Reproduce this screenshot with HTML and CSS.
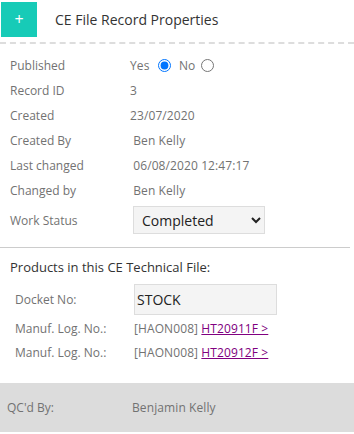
FILE: index.html
```html
<!DOCTYPE html>
<html lang="en">
<head>
  <meta charset="UTF-8">
  <meta name="viewport" content="width=device-width, initial-scale=1.0">
  <title>CE File Record Properties</title>
  <link rel="stylesheet" href="styles.css">
</head>
<body>
<div class="panel">
  <div class="panel-header">
    <button class="toggle">+</button>
    <h2>CE File Record Properties</h2>
  </div>

  <div class="props">
    <div class="row">
      <span class="label">Published</span>
      <span class="value">
        Yes <input type="radio" name="published" checked>
        No <input class="last" type="radio" name="published">
      </span>
    </div>
    <div class="row">
      <span class="label">Record ID</span>
      <span class="value">3</span>
    </div>
    <div class="row">
      <span class="label">Created</span>
      <span class="value">23/07/2020</span>
    </div>
    <div class="row">
      <span class="label">Created By</span>
      <span class="value">&nbsp;Ben Kelly</span>
    </div>
    <div class="row">
      <span class="label">Last changed</span>
      <span class="value">&nbsp;06/08/2020 12:47:17</span>
    </div>
    <div class="row">
      <span class="label">Changed by</span>
      <span class="value">&nbsp;Ben Kelly</span>
    </div>
    <div class="row status">
      <span class="label">Work Status</span>
      <select class="value status-select">
        <option>Completed</option>
        <option>In Progress</option>
        <option>Not Started</option>
      </select>
    </div>
  </div>

  <hr class="divider">

  <div class="products">
    <h3>Products in this CE Technical File:</h3>
    <div class="row docket">
      <span class="label">Docket No:</span>
      <input class="docket-input" type="text" value="STOCK">
    </div>
    <div class="row">
      <span class="label">Manuf. Log. No.:</span>
      <span class="value">[HAON008] <a href="#">HT20911F &gt;</a></span>
    </div>
    <div class="row">
      <span class="label">Manuf. Log. No.:</span>
      <span class="value">[HAON008] <a href="#">HT20912F &gt;</a></span>
    </div>
  </div>

  <div class="qc">
    <span class="label">QC'd By:</span>
    <span class="value">Benjamin Kelly</span>
  </div>
</div>
</body>
</html>
```

FILE: styles.css
```css
body {
  margin: 0;
  font-family: "Open Sans", Arial, sans-serif;
  font-size: 12px;
  color: #727272;
  background: #fff;
}
.panel-header {
  display: flex;
  align-items: flex-start;
  padding: 2px 0 0 1px;
  height: 44px;
  box-sizing: border-box;
  border-bottom: 2px dashed #ddd;
  margin-bottom: 3px;
}
.toggle {
  width: 36px;
  height: 35px;
  border: none;
  background-color: #17cbb7;
  color: #fff;
  font-family: "Open Sans", Arial, sans-serif;
  font-size: 16px;
  padding: 0 0 2px 0;
  margin: 0;
}
.panel-header h2 {
  margin: 8px 0 0 18px;
  font-size: 14px;
  font-weight: normal;
  color: #333;
}
.props {
  padding: 6px 0 0 10px;
}
.row {
  display: flex;
  align-items: center;
  height: 25px;
}
.label {
  width: 120px;
  flex: none;
}
.value {
  letter-spacing: 0.1px;
}
.value input[type="radio"] {
  margin: 0 5px 0 5px;
  vertical-align: -2px;
}
.value input[type="radio"].last {
  margin-left: 2px;
}
.row.status {
  height: 34px;
}
.status-select {
  width: 132px;
  height: 28px;
  margin-left: 3px;
  padding: 0 4px;
  border: 1px solid #ddd;
  background-color: #f4f4f4;
  font-family: "Open Sans", Arial, sans-serif;
  font-size: 14px;
  color: #222;
  letter-spacing: 0;
}
.divider {
  border: none;
  border-top: 1px solid #ccc;
  margin: 10px 4px 0 0;
}
.products {
  padding: 0 0 0 10px;
}
.products h3 {
  margin: 10px 0 6px 0;
  font-size: 13px;
  font-weight: normal;
  color: #333;
}
.products .row {
  padding-left: 5px;
  height: 24px;
}
.products .label {
  width: 119px;
}
.products .row.docket {
  height: 34px;
}
.docket-input {
  width: 143px;
  height: 31px;
  box-sizing: border-box;
  border: 1px solid #ddd;
  background-color: #f4f4f4;
  padding: 0 2px;
  font-family: "Open Sans", Arial, sans-serif;
  font-size: 14px;
  color: #222;
}
.products a {
  color: #800080;
}
.qc {
  display: flex;
  align-items: center;
  margin-top: 19px;
  height: 49px;
  padding-left: 7px;
  background-color: #dcdcdc;
}
.qc .label {
  width: 125px;
}
```
